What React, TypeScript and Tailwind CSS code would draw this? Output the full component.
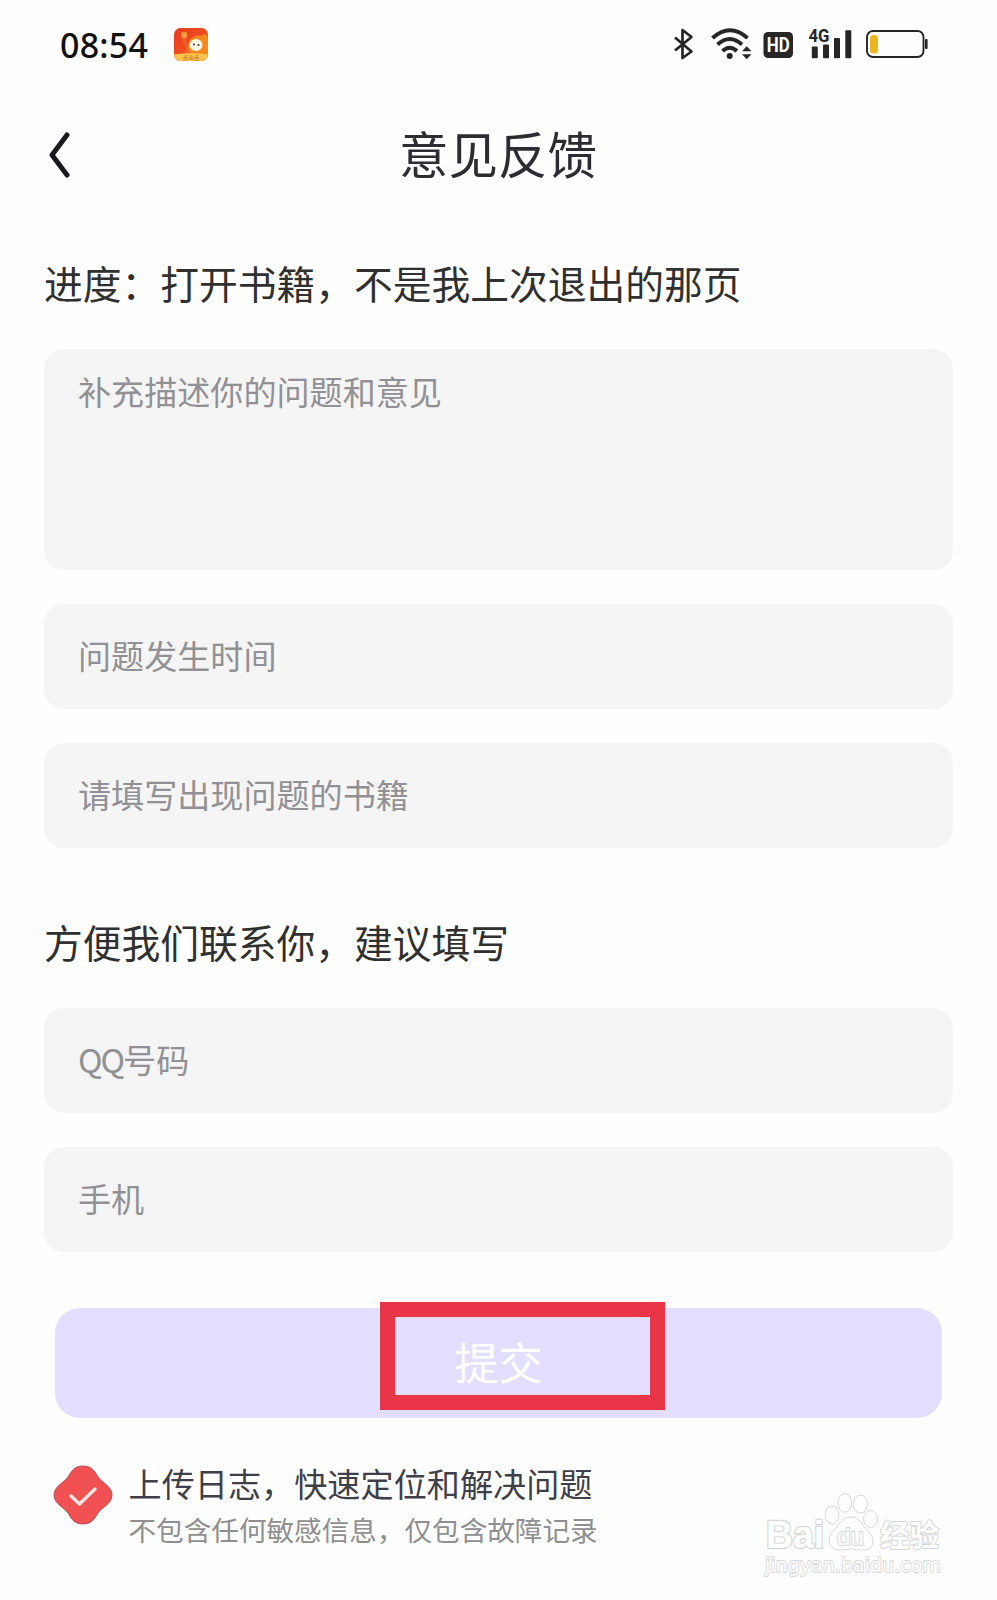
import { ReactNode } from 'react';

interface FieldProps {
  children: ReactNode;
  className?: string;
}

function StatusIcons() {
  return (
    <svg width="260" height="40" viewBox="670 24 260 40" fill="none">
      {/* bluetooth */}
      <path d="M675 37.5L691.5 51.5L682.5 58V30L691.5 37L675 50.5" stroke="#262626" strokeWidth="2.7" strokeLinejoin="round" />
      {/* wifi */}
      <g stroke="#262626" strokeWidth="4">
        <path d="M712.500 38Q730 22.500 747.500 38" />
        <path d="M717.500 44.500Q729.700 33.500 742 44.500" />
        <path d="M722.500 51Q729.700 44.500 737 51" />
      </g>
      <circle cx="729.700" cy="56" r="3" fill="#262626" />
      <path d="M742 51.200L746.700 46.200L751.500 51.200ZM742 54.200L746.700 59.200L751.500 54.200Z" fill="#262626" />
      {/* hd */}
      <rect x="763.500" y="32" width="29.500" height="26" rx="4.500" fill="#262626" />
      <text x="778.300" y="52" textAnchor="middle" fontSize="20" fontWeight="700" textLength="23" lengthAdjust="spacingAndGlyphs" fill="#fff" fontFamily="Roboto, sans-serif">HD</text>
      {/* signal */}
      <text x="808.500" y="42.300" fontSize="19" fontWeight="700" textLength="21" lengthAdjust="spacingAndGlyphs" fill="#262626" fontFamily="Roboto, sans-serif">4G</text>
      <g fill="#262626">
        <rect x="811.800" y="46.500" width="6" height="11.800" rx="1" />
        <rect x="823" y="44.500" width="6" height="13.800" rx="1" />
        <rect x="834" y="38" width="6" height="20.300" rx="1" />
        <rect x="845.300" y="30.300" width="6" height="28" rx="1" />
      </g>
      {/* battery */}
      <rect x="867" y="31" width="56.500" height="26" rx="6" stroke="#262626" strokeWidth="1.900" />
      <rect x="870" y="35" width="8" height="18.500" rx="3.500" fill="#edb51f" />
      <rect x="925" y="39" width="2.600" height="10" rx="1" fill="#262626" />
    </svg>
  );
}

function AppBadge() {
  return (
    <svg width="34" height="33" viewBox="0 0 34 33">
      <defs>
        <linearGradient id="badge" x1="0" y1="0" x2="1" y2="1">
          <stop offset="0" stopColor="#e9391f" />
          <stop offset="1" stopColor="#f4631f" />
        </linearGradient>
        <clipPath id="badgeClip">
          <rect width="34" height="33" rx="6.500" />
        </clipPath>
      </defs>
      <g clipPath="url(#badgeClip)">
        <rect width="34" height="33" fill="url(#badge)" />
        <path d="M14 20C13 12 20 7 27 8C30 5 34 7 34 10V28H14Z" fill="#f8891c" />
        <path d="M8 11L12 9L13 18L17 26H10L12 20Z" fill="#f0632b" />
        <circle cx="10" cy="7" r="3.200" fill="#fb9a3d" />
        <ellipse cx="22" cy="17" rx="6.500" ry="6" fill="#fff8ea" />
        <circle cx="20" cy="16.500" r="1" fill="#3d2a22" />
        <circle cx="24.500" cy="17" r="1" fill="#3d2a22" />
        <path d="M0 26.500Q17 24 34 26.500V33H0Z" fill="#fbc34c" />
        <text x="17" y="31.600" textAnchor="middle" fontSize="5.500" fill="#b5541a" fontFamily="'Noto Sans CJK SC', sans-serif">点众点</text>
      </g>
    </svg>
  );
}

function Watermark() {
  return (
    <svg className="absolute left-[760px] top-[1488px]" width="190" height="95" viewBox="760 1488 190 95" fill="#fff" stroke="#d8d8d8" strokeWidth="1" strokeLinejoin="round">
      <text x="766" y="1548" fontSize="38" fontWeight="700" textLength="58" lengthAdjust="spacingAndGlyphs" strokeWidth="2.400" paintOrder="stroke" fontFamily="'Liberation Sans', sans-serif">Bai</text>
      <ellipse cx="832" cy="1515" rx="7" ry="9" />
      <ellipse cx="844.800" cy="1503" rx="6.800" ry="9.300" />
      <ellipse cx="860.500" cy="1504" rx="7" ry="9" />
      <ellipse cx="870.500" cy="1519" rx="7" ry="8.500" />
      <path d="M850.500 1517C857 1517 861 1521 864 1527C868 1532 873 1535 873 1541C873 1547 869 1550 862 1550C856 1550 853 1549 850 1549C846 1549 843 1550.500 838 1550C832 1549 829 1545 829 1540C829 1534 834 1531 837 1527C841 1521 844 1517 850.500 1517Z" />
      <text x="837" y="1544.500" fontSize="24" textLength="27" lengthAdjust="spacingAndGlyphs" strokeWidth="2" paintOrder="stroke" fontFamily="'Liberation Sans', sans-serif">du</text>
      <text x="880" y="1546" fontSize="30" fontWeight="700" textLength="59" lengthAdjust="spacingAndGlyphs" strokeWidth="2" paintOrder="stroke" fontFamily="'Noto Sans CJK SC', sans-serif">经验</text>
      <text x="765" y="1572" fontSize="20" textLength="176" lengthAdjust="spacingAndGlyphs" strokeWidth="1.800" paintOrder="stroke" fontFamily="'DejaVu Sans', sans-serif">jingyan.baidu.com</text>
    </svg>
  );
}

function Field({ children, className = 'h-[105px] items-center pb-[4px]' }: FieldProps) {
  return (
    <div className={`flex w-[909px] rounded-[20px] bg-[#f5f5f5] pl-[34px] text-[33.100px] leading-[40px] text-[#919195] ${className}`}>
      {children}
    </div>
  );
}

export default function App() {
  return (
    <div className="relative h-[1600px] w-[997px] overflow-hidden bg-[#fefefe] font-['Noto_Sans_CJK_SC',sans-serif]">
      <header className="flex h-[88px] items-center pl-[60px] pr-[67px]">
        <span className="w-[88px] whitespace-nowrap pt-px font-['Noto_Sans',sans-serif] text-[34px] font-medium leading-[40px] tracking-[0.200px] text-[#111]">08:54</span>
        <span className="ml-[26px]">
          <AppBadge />
        </span>
        <span className="ml-auto">
          <StatusIcons />
        </span>
      </header>

      <nav className="flex h-[134px] items-center pl-[48px]">
        <svg width="24" height="50" viewBox="0 0 24 50" fill="none">
          <path d="M19 5L4 25L19 45" stroke="#1a1a1c" strokeWidth="5" strokeLinecap="round" strokeLinejoin="round" />
        </svg>
        <h1 className="ml-[327px] pb-[5px] text-[49.500px] leading-[60px] text-[#2c2c32]">意见反馈</h1>
      </nav>

      <main className="pl-[44px]">
        <h2 className="flex h-[127px] items-center pb-[8px] text-[38.750px] leading-[50px] text-[#303030]">进度：打开书籍，不是我上次退出的那页</h2>
        <div className="flex flex-col gap-[34px]">
          <Field className="h-[221px] items-start pt-[22px]">补充描述你的问题和意见</Field>
          <Field>问题发生时间</Field>
          <Field>请填写出现问题的书籍</Field>
        </div>

        <h2 className="flex h-[160px] items-center pb-[7px] pt-[32px] text-[38.750px] leading-[50px] text-[#303030]">方便我们联系你，建议填写</h2>
        <div className="flex flex-col gap-[34px]">
          <Field>
            <span className="tracking-[-2px]">QQ</span>号码
          </Field>
          <Field>手机</Field>
        </div>

        <div className="relative ml-[11px] mt-[56px] h-[110px] w-[887px]">
          <button className="h-full w-full rounded-[25px] bg-[#e3ddfe] pb-[4px] text-[44px] leading-[50px] text-white">提交</button>
          <div className="absolute left-[325px] top-[-6px] h-[108px] w-[285px] border-[15.500px] border-[#ea3548]" />
        </div>
      </main>

      <footer className="flex pl-[53px] pt-[46px]">
        <svg width="60" height="62" viewBox="0 0 60 62" fill="none">
          <path d="M30 2C38 2 41 6 45 13C48 18 59 22 59 31C59 40 48 44 45 49C41 56 38 60 30 60C22 60 19 56 15 49C12 44 1 40 1 31C1 22 12 18 15 13C19 6 22 2 30 2Z" fill="#f15152" stroke="#a84a50" strokeWidth="0.900" />
          <path d="M18 32L26.500 40L42 25" stroke="#fde6e2" strokeWidth="3.400" strokeLinecap="round" strokeLinejoin="round" />
        </svg>
        <div className="-mt-px ml-[15.500px]">
          <p className="text-[33.150px] leading-[40px] text-[#3f3f49]">上传日志，快速定位和解决问题</p>
          <p className="mt-[8px] text-[27.600px] leading-[36px] text-[#8f8f91]">不包含任何敏感信息，仅包含故障记录</p>
        </div>
      </footer>

      <Watermark />
    </div>
  );
}
